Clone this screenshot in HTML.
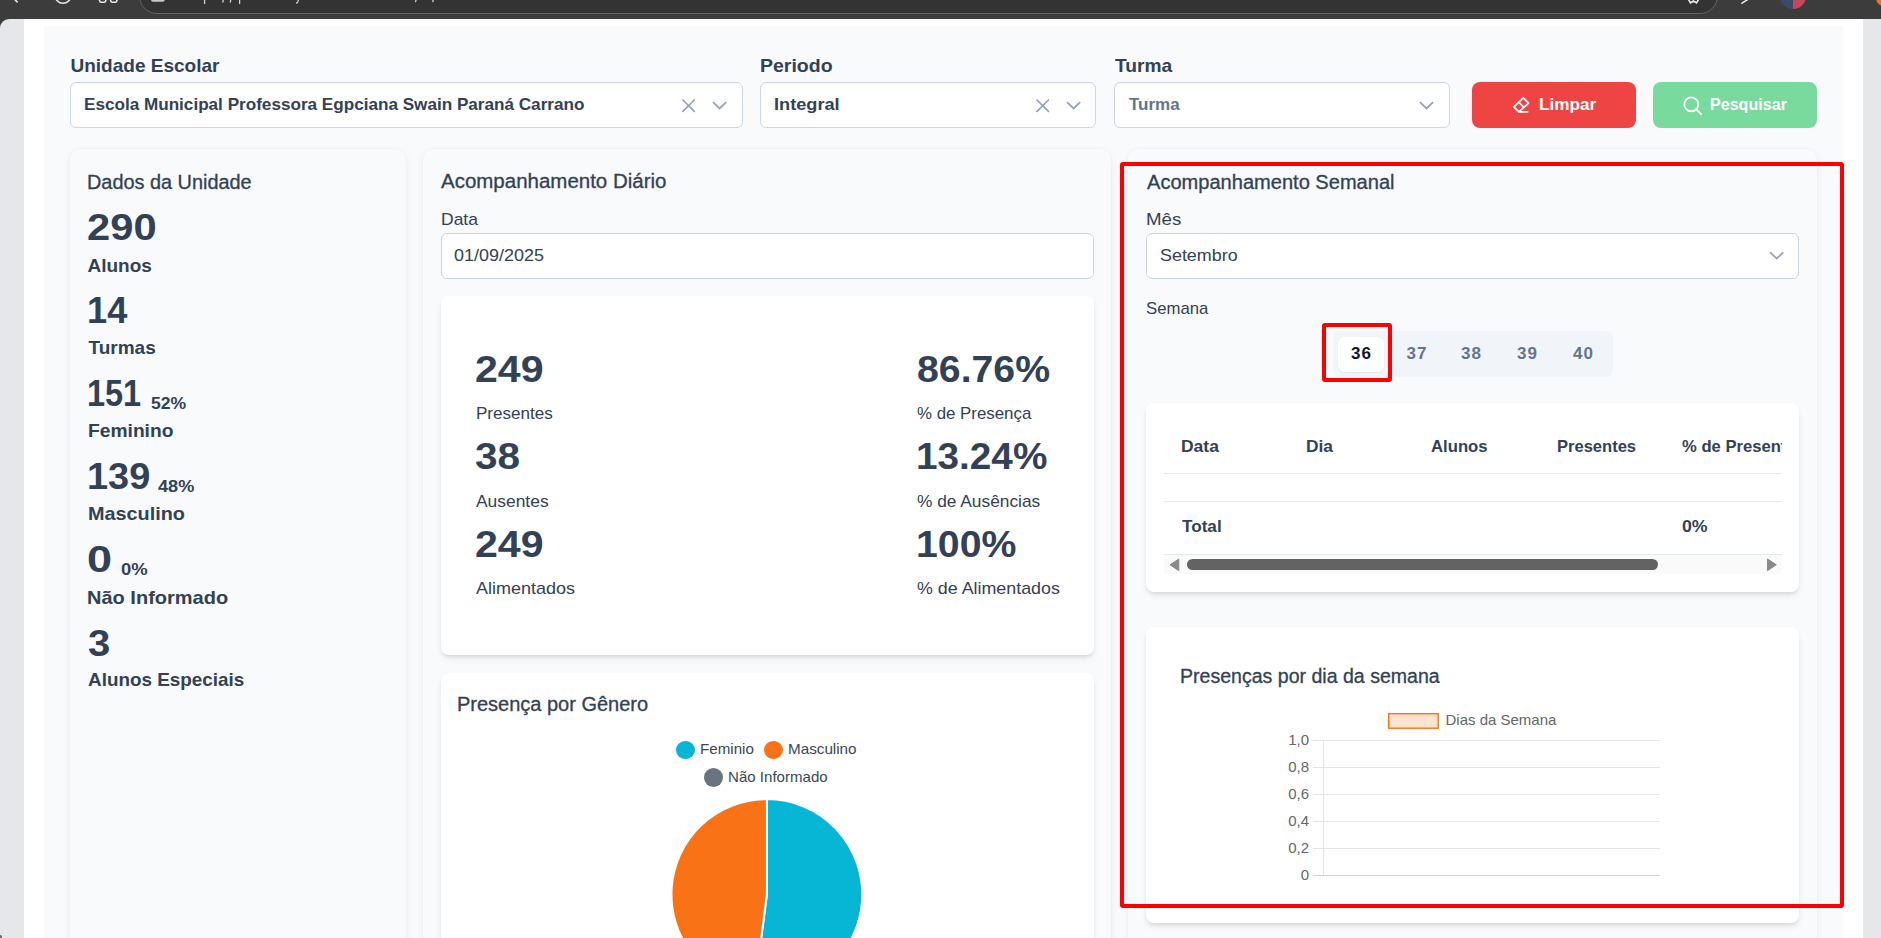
<!DOCTYPE html>
<html><head><meta charset="utf-8"><title>Acompanhamento</title>
<style>
html,body{margin:0;padding:0;}
body{width:1881px;height:938px;overflow:hidden;position:relative;background:#3c3c3c;font-family:"Liberation Sans", sans-serif;}
.t{position:absolute;white-space:nowrap;line-height:1.15;}
.r{position:absolute;box-sizing:border-box;}
svg{position:absolute;overflow:visible;}
</style></head><body>

<div class="r" style="left:0px;top:19px;width:1881px;height:919px;background:#e5e7eb;border-top-left-radius:9px;"></div>
<div class="r" style="left:24px;top:19px;width:1839px;height:919px;background:#ffffff;"></div>
<div class="r" style="left:44px;top:26px;width:1799px;height:912px;background:#f8fafc;"></div>
<div class="r" style="left:139px;top:-40px;width:1579px;height:54px;background:#333333;border:1px solid #646464;border-radius:0 0 18px 18px;"></div>
<svg style="left:0;top:0" width="1" height="1"><g fill="none" stroke="#e8e8e8" stroke-width="1.6" stroke-linecap="round">
<path d="M12 -3 L17.2 1.8"/>
<circle cx="63" cy="-4.6" r="7.9"/>
<rect x="99.5" y="-6" width="6.3" height="8.2" rx="1.6"/>
<rect x="110.6" y="-6" width="6.3" height="8.2" rx="1.6"/>
<path d="M1687.5 -2 L1690.5 2.8 L1693.5 1 L1696.5 2.8 L1699.5 -2" />
<path d="M1742 3.2 L1748.5 -1"/>
</g>
<rect x="151" y="-6" width="13.7" height="7.8" rx="2" fill="#c8c8c8"/>
<g stroke="#d0d0d0" stroke-width="1.3" stroke-linecap="round">
<path d="M204.6 -1 L204.6 3.5"/><path d="M223.5 -1 L222.8 2"/><path d="M231 -1 L230.3 2"/><path d="M239.6 -1 L239.6 3.5"/>
<path d="M298.5 -1 Q298 3 296.5 3"/><path d="M416.2 -1 L415.6 1.6"/><path d="M433.4 -1 L432.8 1.6"/>
</g>
<circle cx="1793" cy="-4" r="13" fill="#3a4a6a"/>
<path d="M1793 -17 A13 13 0 0 1 1806 -4 A13 13 0 0 1 1793 9 Z" fill="#c8465a"/>
<circle cx="1884" cy="-2" r="8" fill="#e8762a"/>
</svg>
<div class="t" style="left:70.5px;top:55.3px;font-size:19px;font-weight:700;color:#334155;transform:scaleX(1.0000);transform-origin:0 0;">Unidade Escolar</div>
<div class="t" style="left:760.0px;top:55.3px;font-size:19px;font-weight:700;color:#334155;transform:scaleX(1.0261);transform-origin:0 0;">Periodo</div>
<div class="t" style="left:1114.6px;top:55.3px;font-size:19px;font-weight:700;color:#334155;transform:scaleX(1.0105);transform-origin:0 0;">Turma</div>
<div class="r" style="left:70px;top:82px;width:673px;height:46px;background:#fff;border:1px solid #cbd5e1;border-radius:6px;"></div>
<div class="r" style="left:760px;top:82px;width:336px;height:46px;background:#fff;border:1px solid #cbd5e1;border-radius:6px;"></div>
<div class="r" style="left:1114px;top:82px;width:336px;height:46px;background:#fff;border:1px solid #cbd5e1;border-radius:6px;"></div>
<div class="t" style="left:84.4px;top:94.6px;font-size:17px;font-weight:700;color:#334155;transform:scaleX(1.0069);transform-origin:0 0;">Escola Municipal Professora Egpciana Swain Paraná Carrano</div>
<div class="t" style="left:774.1px;top:94.6px;font-size:17px;font-weight:700;color:#334155;transform:scaleX(1.0695);transform-origin:0 0;">Integral</div>
<div class="t" style="left:1129.0px;top:94.6px;font-size:17px;font-weight:700;color:#64748b;transform:scaleX(1.0000);transform-origin:0 0;">Turma</div>
<svg style="left:0;top:0" width="1" height="1"><path d="M682.4 99.5 L694.8000000000001 111.9 M694.8000000000001 99.5 L682.4 111.9" stroke="#94a3b8" stroke-width="1.7" fill="none"/></svg>
<svg style="left:0;top:0" width="1" height="1"><path d="M713.0 102.1 L719.6 108.39999999999999 L726.2 102.1" stroke="#94a3b8" stroke-width="1.8" fill="none"/></svg>
<svg style="left:0;top:0" width="1" height="1"><path d="M1036.5 99.5 L1048.9 111.9 M1048.9 99.5 L1036.5 111.9" stroke="#94a3b8" stroke-width="1.7" fill="none"/></svg>
<svg style="left:0;top:0" width="1" height="1"><path d="M1067.0 102.1 L1073.6 108.39999999999999 L1080.1999999999998 102.1" stroke="#94a3b8" stroke-width="1.8" fill="none"/></svg>
<svg style="left:0;top:0" width="1" height="1"><path d="M1419.9 102.1 L1426.5 108.39999999999999 L1433.1 102.1" stroke="#94a3b8" stroke-width="1.8" fill="none"/></svg>
<div class="r" style="left:1472px;top:82px;width:164px;height:46px;background:#ef4444;border-radius:8px;"></div>
<div class="r" style="left:1653px;top:82px;width:164px;height:46px;background:#78da9d;border-radius:8px;"></div>
<div class="t" style="left:1538.7px;top:94.7px;font-size:17px;font-weight:700;color:#ffffff;transform:scaleX(1.0109);transform-origin:0 0;">Limpar</div>
<div class="t" style="left:1709.9px;top:94.7px;font-size:17px;font-weight:700;color:#ffffff;transform:scaleX(0.9463);transform-origin:0 0;">Pesquisar</div>
<svg style="left:0;top:0" width="1" height="1"><g fill="none" stroke="#fff" stroke-width="1.7" stroke-linejoin="round" stroke-linecap="round"><path d="M1523.4 97.9 L1528.6 103.1 L1518.9 111.9 L1513.9 106.9 Z"/><path d="M1518.7 102.2 L1524 107.3"/><path d="M1518.9 111.9 L1527.6 111.9"/></g></svg>
<svg style="left:1683px;top:95.6px" width="20" height="19" viewBox="0 0 20 19"><g fill="none" stroke="#fff" stroke-width="1.8"><circle cx="8.3" cy="8.3" r="7"/><path d="M13.3 13.3 L18 18" stroke-linecap="round"/></g></svg>
<div class="r" style="left:70px;top:149px;width:336px;height:851px;background:#f8fafc;border-radius:10px;box-shadow:0 3px 10px rgba(0,0,0,0.06), 0 0 2px rgba(0,0,0,0.05);"></div>
<div class="r" style="left:423px;top:149px;width:688px;height:851px;background:#f8fafc;border-radius:10px;box-shadow:0 3px 10px rgba(0,0,0,0.06), 0 0 2px rgba(0,0,0,0.05);"></div>
<div class="r" style="left:1128px;top:149px;width:689px;height:851px;background:#f8fafc;border-radius:10px;box-shadow:0 3px 10px rgba(0,0,0,0.06), 0 0 2px rgba(0,0,0,0.05);"></div>
<div class="t" style="left:86.5px;top:171.3px;font-size:20px;font-weight:400;color:#334155;transform:scaleX(0.9939);transform-origin:0 0;-webkit-text-stroke:0.3px currentColor;">Dados da Unidade</div>
<div class="t" style="left:87.4px;top:206.9px;font-size:36px;font-weight:700;color:#334155;transform:scaleX(1.1586);transform-origin:0 0;">290</div>
<div class="t" style="left:87.5px;top:255.0px;font-size:19px;font-weight:700;color:#334155;transform:scaleX(1.0000);transform-origin:0 0;">Alunos</div>
<div class="t" style="left:86.6px;top:290.1px;font-size:36px;font-weight:700;color:#334155;transform:scaleX(1.0053);transform-origin:0 0;">14</div>
<div class="t" style="left:88.5px;top:337.3px;font-size:19px;font-weight:700;color:#334155;transform:scaleX(1.0000);transform-origin:0 0;">Turmas</div>
<div class="t" style="left:86.8px;top:373.1px;font-size:36px;font-weight:700;color:#334155;transform:scaleX(0.9018);transform-origin:0 0;">151</div>
<div class="t" style="left:87.5px;top:419.9px;font-size:19px;font-weight:700;color:#334155;transform:scaleX(1.0120);transform-origin:0 0;">Feminino</div>
<div class="t" style="left:86.5px;top:456.1px;font-size:36px;font-weight:700;color:#334155;transform:scaleX(1.0526);transform-origin:0 0;">139</div>
<div class="t" style="left:87.5px;top:503.1px;font-size:19px;font-weight:700;color:#334155;transform:scaleX(1.0440);transform-origin:0 0;">Masculino</div>
<div class="t" style="left:87.3px;top:538.7px;font-size:36px;font-weight:700;color:#334155;transform:scaleX(1.2500);transform-origin:0 0;">0</div>
<div class="t" style="left:87.4px;top:586.6px;font-size:19px;font-weight:700;color:#334155;transform:scaleX(1.0530);transform-origin:0 0;">Não Informado</div>
<div class="t" style="left:87.5px;top:622.7px;font-size:36px;font-weight:700;color:#334155;transform:scaleX(1.1111);transform-origin:0 0;">3</div>
<div class="t" style="left:87.5px;top:668.5px;font-size:19px;font-weight:700;color:#334155;transform:scaleX(0.9936);transform-origin:0 0;">Alunos Especiais</div>
<div class="t" style="left:150.7px;top:394.7px;font-size:16px;font-weight:700;color:#334155;transform:scaleX(1.0968);transform-origin:0 0;">52%</div>
<div class="t" style="left:157.9px;top:477.8px;font-size:16px;font-weight:700;color:#334155;transform:scaleX(1.1344);transform-origin:0 0;">48%</div>
<div class="t" style="left:120.6px;top:560.9px;font-size:16px;font-weight:700;color:#334155;transform:scaleX(1.1500);transform-origin:0 0;">0%</div>
<div class="t" style="left:441.2px;top:170.3px;font-size:20px;font-weight:400;color:#334155;transform:scaleX(1.0242);transform-origin:0 0;-webkit-text-stroke:0.3px currentColor;">Acompanhamento Diário</div>
<div class="t" style="left:440.5px;top:209.6px;font-size:17px;font-weight:400;color:#334155;transform:scaleX(1.0286);transform-origin:0 0;">Data</div>
<div class="r" style="left:441px;top:233px;width:653px;height:46px;background:#fff;border:1px solid #cbd5e1;border-radius:6px;"></div>
<div class="t" style="left:454.3px;top:246.0px;font-size:17px;font-weight:400;color:#334155;transform:scaleX(1.0571);transform-origin:0 0;">01/09/2025</div>
<div class="r" style="left:441px;top:296px;width:653px;height:359px;background:#fff;border-radius:8px;box-shadow:0 4px 6px -1px rgba(0,0,0,0.1), 0 2px 4px -2px rgba(0,0,0,0.1);"></div>
<div class="t" style="left:475.2px;top:349.4px;font-size:36px;font-weight:700;color:#334155;transform:scaleX(1.1414);transform-origin:0 0;">249</div>
<div class="t" style="left:475.5px;top:403.8px;font-size:17px;font-weight:400;color:#334155;transform:scaleX(1.0027);transform-origin:0 0;">Presentes</div>
<div class="t" style="left:916.6px;top:349.4px;font-size:36px;font-weight:700;color:#334155;transform:scaleX(1.0900);transform-origin:0 0;">86.76%</div>
<div class="t" style="left:917.0px;top:403.8px;font-size:17px;font-weight:400;color:#334155;transform:scaleX(0.9912);transform-origin:0 0;">% de Presença</div>
<div class="t" style="left:475.2px;top:436.3px;font-size:36px;font-weight:700;color:#334155;transform:scaleX(1.1263);transform-origin:0 0;">38</div>
<div class="t" style="left:475.8px;top:492.0px;font-size:17px;font-weight:400;color:#334155;transform:scaleX(1.0243);transform-origin:0 0;">Ausentes</div>
<div class="t" style="left:915.5px;top:436.3px;font-size:36px;font-weight:700;color:#334155;transform:scaleX(1.0756);transform-origin:0 0;">13.24%</div>
<div class="t" style="left:917.0px;top:492.0px;font-size:17px;font-weight:400;color:#334155;transform:scaleX(1.0185);transform-origin:0 0;">% de Ausências</div>
<div class="t" style="left:475.2px;top:523.8px;font-size:36px;font-weight:700;color:#334155;transform:scaleX(1.1414);transform-origin:0 0;">249</div>
<div class="t" style="left:475.8px;top:579.0px;font-size:17px;font-weight:400;color:#334155;transform:scaleX(1.0581);transform-origin:0 0;">Alimentados</div>
<div class="t" style="left:915.5px;top:523.8px;font-size:36px;font-weight:700;color:#334155;transform:scaleX(1.0899);transform-origin:0 0;">100%</div>
<div class="t" style="left:917.0px;top:579.0px;font-size:17px;font-weight:400;color:#334155;transform:scaleX(1.0500);transform-origin:0 0;">% de Alimentados</div>
<div class="r" style="left:441px;top:673px;width:653px;height:327px;background:#fff;border-radius:8px;box-shadow:0 4px 6px -1px rgba(0,0,0,0.1), 0 2px 4px -2px rgba(0,0,0,0.1);"></div>
<div class="t" style="left:456.9px;top:693.2px;font-size:20px;font-weight:400;color:#334155;transform:scaleX(1.0000);transform-origin:0 0;-webkit-text-stroke:0.3px currentColor;">Presença por Gênero</div>
<div class="r" style="left:675.9px;top:740.5px;width:18.8px;height:18.8px;border-radius:50%;background:#06b6d4;"></div>
<div class="t" style="left:699.8px;top:740.2px;font-size:15px;font-weight:400;color:#3b4656;transform:scaleX(1.0096);transform-origin:0 0;">Feminio</div>
<div class="r" style="left:764.3000000000001px;top:740.5px;width:18.8px;height:18.8px;border-radius:50%;background:#f97316;"></div>
<div class="t" style="left:788.0px;top:740.2px;font-size:15px;font-weight:400;color:#3b4656;transform:scaleX(1.0152);transform-origin:0 0;">Masculino</div>
<div class="r" style="left:704.1px;top:768.1px;width:18.8px;height:18.8px;border-radius:50%;background:#6b7280;"></div>
<div class="t" style="left:728.3px;top:768.0px;font-size:15px;font-weight:400;color:#3b4656;transform:scaleX(1.0041);transform-origin:0 0;">Não Informado</div>
<svg style="left:0;top:0" width="1" height="1"><path d="M766.9 894.5 L766.9 799.1 A95.4 95.4 0 1 1 754.53 989.10 Z" fill="#06b6d4" stroke="#fff" stroke-width="2"/><path d="M766.9 894.5 L754.53 989.10 A95.4 95.4 0 0 1 766.9 799.1 Z" fill="#f97316" stroke="#fff" stroke-width="2"/></svg>
<div class="t" style="left:1147.4px;top:171.0px;font-size:20px;font-weight:400;color:#334155;transform:scaleX(1.0029);transform-origin:0 0;-webkit-text-stroke:0.3px currentColor;">Acompanhamento Semanal</div>
<div class="t" style="left:1146.3px;top:209.7px;font-size:17px;font-weight:400;color:#334155;transform:scaleX(1.1000);transform-origin:0 0;">Mês</div>
<div class="r" style="left:1146px;top:233px;width:653px;height:46px;background:#fff;border:1px solid #cbd5e1;border-radius:6px;"></div>
<div class="t" style="left:1160.1px;top:245.5px;font-size:17px;font-weight:400;color:#334155;transform:scaleX(1.0528);transform-origin:0 0;">Setembro</div>
<svg style="left:0;top:0" width="1" height="1"><path d="M1770.1000000000001 252.3 L1776.7 258.6 L1783.3 252.3" stroke="#94a3b8" stroke-width="1.8" fill="none"/></svg>
<div class="t" style="left:1146.4px;top:298.8px;font-size:17px;font-weight:400;color:#334155;transform:scaleX(0.9839);transform-origin:0 0;">Semana</div>
<div class="r" style="left:1333px;top:331px;width:280px;height:46px;background:#f1f5f9;border-radius:7px;"></div>
<div class="r" style="left:1338px;top:337px;width:46px;height:35px;background:#fff;border-radius:7px;box-shadow:0 1px 2px rgba(0,0,0,0.06);"></div>
<div class="t" style="left:1341.5px;width:40px;text-align:center;top:344.0px;font-size:17px;font-weight:700;color:#0f172a;letter-spacing:1px">36</div>
<div class="t" style="left:1397px;width:40px;text-align:center;top:344.0px;font-size:17px;font-weight:700;color:#64748b;letter-spacing:1px">37</div>
<div class="t" style="left:1451.5px;width:40px;text-align:center;top:344.0px;font-size:17px;font-weight:700;color:#64748b;letter-spacing:1px">38</div>
<div class="t" style="left:1507.4px;width:40px;text-align:center;top:344.0px;font-size:17px;font-weight:700;color:#64748b;letter-spacing:1px">39</div>
<div class="t" style="left:1563.5px;width:40px;text-align:center;top:344.0px;font-size:17px;font-weight:700;color:#64748b;letter-spacing:1px">40</div>
<div class="r" style="left:1146px;top:403px;width:653px;height:189px;background:#fff;border-radius:8px;box-shadow:0 4px 6px -1px rgba(0,0,0,0.1), 0 2px 4px -2px rgba(0,0,0,0.1);"></div>
<div class="r" style="left:1164px;top:473px;width:618px;height:1px;background:#e2e8f0;"></div>
<div class="r" style="left:1164px;top:501px;width:618px;height:1px;background:#e2e8f0;"></div>
<div class="r" style="left:1164px;top:554px;width:618px;height:1px;background:#e2e8f0;"></div>
<div class="r" style="left:1164px;top:555px;width:618px;height:19px;background:#fafafa;"></div>
<div class="t" style="left:1181.0px;top:436.5px;font-size:17px;font-weight:700;color:#334155;transform:scaleX(1.0278);transform-origin:0 0;">Data</div>
<div class="t" style="left:1306.0px;top:436.5px;font-size:17px;font-weight:700;color:#334155;transform:scaleX(1.0192);transform-origin:0 0;">Dia</div>
<div class="t" style="left:1431.0px;top:436.5px;font-size:17px;font-weight:700;color:#334155;transform:scaleX(0.9821);transform-origin:0 0;">Alunos</div>
<div class="t" style="left:1556.5px;top:436.5px;font-size:17px;font-weight:700;color:#334155;transform:scaleX(0.9725);transform-origin:0 0;">Presentes</div>
<div class="r" style="left:1682px;top:430px;width:100px;height:30px;overflow:hidden"><div class="t" style="left:0px;top:6.5px;font-size:17px;font-weight:700;color:#334155;transform:scaleX(0.977);transform-origin:0 0">% de Presentes</div></div>
<div class="t" style="left:1182.0px;top:517.4px;font-size:17px;font-weight:700;color:#334155;transform:scaleX(1.0079);transform-origin:0 0;">Total</div>
<div class="t" style="left:1681.5px;top:517.4px;font-size:17px;font-weight:700;color:#334155;transform:scaleX(1.0435);transform-origin:0 0;">0%</div>
<svg style="left:0;top:0" width="1" height="1"><path d="M1170 564.8 L1178.8 559 L1178.8 570.7 Z" fill="#8a8a8a" stroke="#8a8a8a" stroke-width="1" stroke-linejoin="round"/><path d="M1776.3 564.8 L1767.5 559 L1767.5 570.7 Z" fill="#8a8a8a" stroke="#8a8a8a" stroke-width="1" stroke-linejoin="round"/></svg>
<div class="r" style="left:1187px;top:559px;width:471px;height:11px;background:#636363;border-radius:6px;"></div>
<div class="r" style="left:1146px;top:627px;width:653px;height:296px;background:#fff;border-radius:8px;box-shadow:0 4px 6px -1px rgba(0,0,0,0.1), 0 2px 4px -2px rgba(0,0,0,0.1);"></div>
<div class="t" style="left:1180.2px;top:664.5px;font-size:20px;font-weight:400;color:#334155;transform:scaleX(0.9773);transform-origin:0 0;-webkit-text-stroke:0.3px currentColor;">Presenças por dia da semana</div>
<svg style="left:0;top:0" width="1" height="1"><rect x="1388.7" y="713.7" width="49.5" height="14.5" fill="rgba(249,115,22,0.2)" stroke="#f97316" stroke-width="1.4"/></svg>
<div class="t" style="left:1445.5px;top:710.8px;font-size:15px;font-weight:400;color:#666666;transform:scaleX(1.0000);transform-origin:0 0;">Dias da Semana</div>
<div class="r" style="left:1313px;top:740px;width:347px;height:1px;background:#e5e5e5;"></div>
<div class="t" style="left:1250px;width:59px;text-align:right;top:730.8px;font-size:15px;color:#666666">1,0</div>
<div class="r" style="left:1313px;top:767px;width:347px;height:1px;background:#e5e5e5;"></div>
<div class="t" style="left:1250px;width:59px;text-align:right;top:757.9px;font-size:15px;color:#666666">0,8</div>
<div class="r" style="left:1313px;top:794px;width:347px;height:1px;background:#e5e5e5;"></div>
<div class="t" style="left:1250px;width:59px;text-align:right;top:785.0px;font-size:15px;color:#666666">0,6</div>
<div class="r" style="left:1313px;top:821px;width:347px;height:1px;background:#e5e5e5;"></div>
<div class="t" style="left:1250px;width:59px;text-align:right;top:812.0px;font-size:15px;color:#666666">0,4</div>
<div class="r" style="left:1313px;top:848px;width:347px;height:1px;background:#e5e5e5;"></div>
<div class="t" style="left:1250px;width:59px;text-align:right;top:839.1px;font-size:15px;color:#666666">0,2</div>
<div class="r" style="left:1313px;top:875px;width:347px;height:1px;background:#e5e5e5;"></div>
<div class="t" style="left:1250px;width:59px;text-align:right;top:866.2px;font-size:15px;color:#666666">0</div>
<div class="r" style="left:1323px;top:740px;width:1px;height:136px;background:#e5e5e5;"></div>
<div class="r" style="left:1313px;top:875px;width:347px;height:1px;background:#d4d4d4;"></div>
<div class="r" style="left:-1px;top:935px;width:3px;height:4px;background:#6b6b6b;border-radius:50%;"></div>
<div class="r" style="left:1119.5px;top:161.5px;width:724.0px;height:746.0px;border:4px solid #ff0000;border-radius:3px;"></div>
<div class="r" style="left:1321.5px;top:322.5px;width:70.0px;height:59.0px;border:4px solid #ff0000;border-radius:3px;"></div>
</body></html>
